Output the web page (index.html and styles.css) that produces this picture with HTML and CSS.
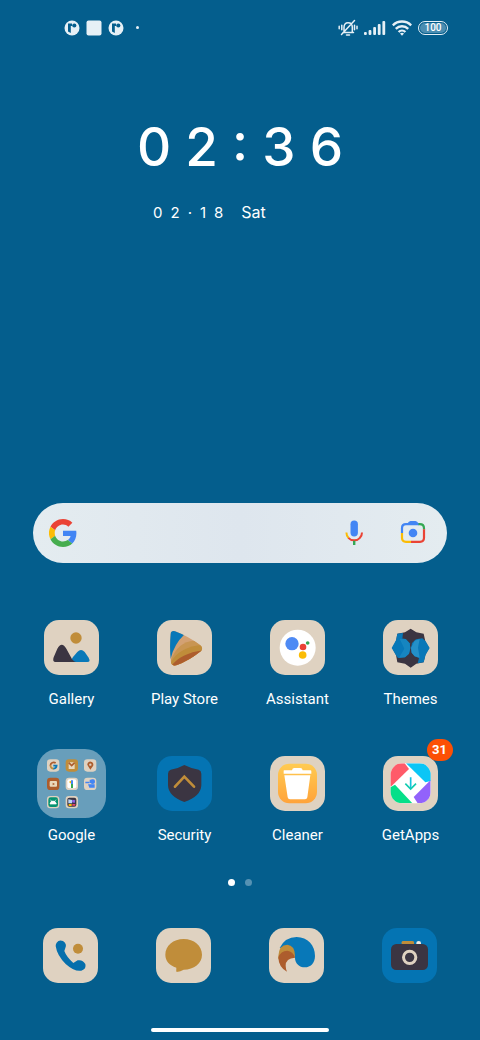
FILE: index.html
```html
<!DOCTYPE html>
<html lang="en">
<head>
<meta charset="utf-8">
<meta name="viewport" content="width=device-width, initial-scale=1">
<title>Home screen</title>
<link rel="stylesheet" href="styles.css">
</head>
<body>
<div class="screen">
  <header class="status">
    <div class="status-left">
      <svg width="16" height="16" viewBox="0 0 16 16"><circle cx="8" cy="8" r="7.500" fill="#e6f0f6"/><path d="M4 3.500h4v2.500H6.800V13L4 11.500z" fill="#045e8d"/><circle cx="10.300" cy="5.500" r="2.100" fill="#045e8d"/></svg>
      <svg width="16" height="16" viewBox="0 0 16 16"><rect x=".5" y=".5" width="15" height="15" rx="2" fill="#e6f0f6"/></svg>
      <svg width="16" height="16" viewBox="0 0 16 16"><circle cx="8" cy="8" r="7.500" fill="#e6f0f6"/><path d="M4 3.500h4v2.500H6.800V13L4 11.500z" fill="#045e8d"/><circle cx="10.300" cy="5.500" r="2.100" fill="#045e8d"/></svg>
      <span class="more-dot"></span>
    </div>
    <div class="status-right">
      <svg width="20" height="18" viewBox="0 0 20 18" fill="none" stroke="#e6f0f6" stroke-width="1.500" stroke-linecap="round"><path d="M5 13.500h10.500M6 13V8.200C6 5.300 7.500 3.800 10 3.800S14.300 5.300 14.300 8.200V13M16.500 1.500 3.500 15.500M8.500 16h3M3.800 6.300v4.500M1.200 7.300v2.500M16.500 6.300v4.500M19 7.300v2.500"/></svg>
      <svg width="22" height="16" viewBox="0 0 22 16" fill="#e6f0f6"><rect x="0" y="12" width="2.800" height="3" rx="1"/><rect x="4.600" y="10" width="2.800" height="5" rx="1"/><rect x="9.200" y="7" width="2.800" height="8" rx="1"/><rect x="13.800" y="4" width="2.800" height="11" rx="1"/><rect x="18.400" y="1" width="2.800" height="14" rx="1"/></svg>
      <svg width="20" height="16" viewBox="0 0 20 16" fill="none" stroke="#e6f0f6" stroke-width="2.400"><path d="M.8 5.300c5-5 13.400-5 18.400 0M3.800 8.800c3.400-3.400 9-3.400 12.400 0M6.600 12c1.900-1.900 4.900-1.900 6.800 0"/><path d="M8 13.400q2-1.400 4 0l-2 2.400z" fill="#e6f0f6" stroke="none"/></svg>
      <span class="battery"><span class="battery-level">100</span></span>
    </div>
  </header>

  <main class="home">
    <section class="clock">
      <time class="time">0 2 : 3 6</time>
      <div class="date"><span>0</span><span>2</span><span>·</span><span>1</span><span>8</span><span class="weekday">Sat</span></div>
    </section>

    <form class="search">
      <svg width="28" height="28" viewBox="0 0 48 48" aria-hidden="true"><path fill="#ea4335" d="M24 9.500c3.540 0 6.710 1.220 9.210 3.600l6.850-6.850C35.900 2.380 30.470 0 24 0 14.620 0 6.510 5.380 2.560 13.220l7.980 6.190C12.430 13.720 17.740 9.500 24 9.500z"/><path fill="#4285f4" d="M46.980 24.550c0-1.570-.15-3.090-.38-4.550H24v9.020h12.940c-.58 2.960-2.260 5.480-4.780 7.180l7.730 6c4.510-4.180 7.090-10.360 7.090-17.650z"/><path fill="#fbbc05" d="M10.530 28.590a14.500 14.500 0 0 1 0-9.180l-7.980-6.190a24 24 0 0 0 0 21.560z"/><path fill="#46ad4f" d="M24 48c6.480 0 11.930-2.130 15.890-5.810l-7.730-6c-2.150 1.450-4.920 2.300-8.160 2.300-6.260 0-11.570-4.220-13.470-9.910l-7.980 6.190C6.510 42.620 14.620 48 24 48z"/></svg>
      <input class="search-input" type="text" aria-label="Search">
      <button class="search-button" type="button" aria-label="Voice search"><svg width="26" height="26" viewBox="0 0 26 26" fill="none"><rect x="9.500" y=".5" width="7.400" height="16" rx="3.700" fill="#4285f4"/><path d="M5.400 12.500c0 2.300.8 4.100 2.200 5.500" stroke="#fbbc05" stroke-width="2"/><path d="M7.400 17.800c3 3.400 8.600 3.400 11.500 0 1.300-1.400 2.100-3.200 2.100-5.300" stroke="#ea4335" stroke-width="2"/><path d="M13.200 20.800v4.200" stroke="#34a853" stroke-width="2.400"/></svg></button>
      <button class="search-button" type="button" aria-label="Search by image"><svg width="26" height="26" viewBox="0 0 26 26" fill="none" stroke-width="2.200"><path d="M7 4Q9 1 10.500 1h5Q17 1 19 4z" fill="#4285f4"/><path d="M2 13V8.200Q2 4.200 6 4.200h13" stroke="#4285f4"/><path d="M18.500 4.200h1.300q4.200 0 4.200 4.200v1" stroke="#34a853"/><path d="M24 9.300v8.500q0 4-4 4h-9" stroke="#ea4335"/><path d="M11 21.800H6q-4 0-4-4V13" stroke="#fbbc05"/><circle cx="13" cy="13" r="4.300" fill="#4285f4"/></svg></button>
    </form>

    <nav class="apps" aria-label="Apps">
      <a class="app" href="#gallery">
        <svg class="icon sand" viewBox="0 0 165 165"><circle cx="96" cy="54" r="17" fill="#c08d3a"/><path d="M86 126Q80 120 87 111L100 96Q111 84 122 96L134 113Q141 126 130 126z" fill="#0878b8"/><path d="M35 126Q24 126 29 112L40 86Q53 63 67 86L81 112Q87 125 96 126z" fill="#3b3542"/></svg>
        <span class="label">Gallery</span>
      </a>
      <a class="app" href="#play">
        <svg class="icon sand" viewBox="0 0 165 165"><defs><clipPath id="play"><path d="M41 42Q42 31 54 34Q92 48 129 75Q140 84 132 93Q96 122 58 136Q45 140 42 127Q37 84 41 42z"/></clipPath></defs><g clip-path="url(#play)"><path d="M30 20h120v130H30z" fill="#d3a173"/><path d="M30 20h75L80 46Q52 72 41 116H30z" fill="#0878b8"/><path d="M41 122Q62 64 112 62L145 74V150H41z" fill="#c89552"/><path d="M41 128Q68 78 145 74V150H41z" fill="#c08d3a"/><path d="M43 138Q72 98 145 90V150H43z" fill="#ad5d2d"/></g></svg>
        <span class="label">Play Store</span>
      </a>
      <a class="app" href="#assistant">
        <svg class="icon sand" viewBox="0 0 165 165"><circle cx="83" cy="83" r="54" fill="#fff"/><circle cx="66" cy="71" r="20" fill="#4e8af4"/><circle cx="99" cy="81" r="10" fill="#ea4335"/><circle cx="98" cy="105" r="11.500" fill="#fbbc05"/><circle cx="113" cy="69" r="5.500" fill="#34a853"/></svg>
        <span class="label">Assistant</span>
      </a>
      <a class="app" href="#themes">
        <svg class="icon sand" viewBox="0 0 165 165"><path d="M83 26 100 37 122 41 127 64 138 84 127 105 122 127 100 131 83 143 66 131 43 127 39 105 28 84 39 64 43 41 66 37z" fill="#3b3542"/><path d="M43 41 60 39 58 56 42 66 38 66z" fill="#0878b8"/><path d="M38 62 52 55 68 57 80 70 82 84 78 101 66 112 45 114 38 104 26 84z" fill="#0878b8"/><path d="M84 84 87 69 99 58 118 55 128 64 140 84 128 104 122 127 104 130 108 114 95 109 86 98z" fill="#0878b8"/><path d="M50 56 68 57 80 70 82 84 78 101 66 112 48 113 64 86z" fill="#1685c0"/><path d="M84 84 95 62 110 57 105 83 110 113 95 109 86 98z" fill="#2490c8"/></svg>
        <span class="label">Themes</span>
      </a>

      <a class="app" href="#google">
        <svg class="icon folder" viewBox="0 0 207 207">
          <g fill="#dfd2c1"><rect x="30" y="31" width="37" height="37" rx="10"/><rect x="86" y="31" width="37" height="37" rx="10" fill="#c08d3a"/><rect x="141" y="31" width="37" height="37" rx="10"/><rect x="30" y="86" width="37" height="37" rx="10" fill="#ad5d2d"/><rect x="86" y="86" width="37" height="37" rx="10"/><rect x="141" y="86" width="37" height="37" rx="10"/><rect x="30" y="141" width="37" height="37" rx="10"/><rect x="86" y="141" width="37" height="37" rx="10"/></g>
          <path d="M56 42a10 10 0 0 0-16 8" stroke="#ad5d2d" stroke-width="5" fill="none"/><path d="M40 49q2 11 10 10" stroke="#c08d3a" stroke-width="5" fill="none"/><path d="M49 50h10q-1 9-10 9" stroke="#0878b8" stroke-width="5" fill="none"/>
          <path d="M95 40h18v20H95z" fill="#ead8bd"/><path d="m95 41 9 9 9-9" stroke="#ad5d2d" stroke-width="5" fill="none"/>
          <path d="M151 47a9 9 0 1 1 17 4l-8 11-7-11z" fill="#ad5d2d"/><circle cx="160" cy="47" r="3.500" fill="#dfd2c1"/>
          <rect x="38" y="96" width="22" height="17" rx="3" fill="#ead8bd"/><path d="m47 101 7 4-7 4z" fill="#ad5d2d"/>
          <rect x="91" y="91" width="27" height="27" rx="6" fill="#fff"/><path d="m98 101 8-5" stroke="#fbbc05" stroke-width="6"/><path d="M105 94v12" stroke="#4285f4" stroke-width="6"/><path d="M105 105v12" stroke="#34a853" stroke-width="6"/>
          <path d="M153 106h20v10h-16zM158 92h14v10h-14zM145 98h12v5h-12z" fill="#4285f4"/><circle cx="167" cy="98" r="7" fill="#4285f4"/>
          <rect x="34" y="145" width="29" height="29" rx="7" fill="#079271"/><path d="M39 165q1-9 9-9t10 9zM40 152l6 7M57 152l-6 7" fill="#fff" stroke="#fff" stroke-width="2"/>
          <rect x="91" y="146" width="27" height="27" rx="6" fill="#3b3542"/><path d="m94 151 12 2-1 10H94z" fill="#b9d6f7"/><path d="m106 152 9 2-2 8-8-2z" fill="#8e60e4"/><path d="M95 165h9v6h-9z" fill="#fbbc05"/><path d="M106 165h9v5h-9z" fill="#ea4368"/>
        </svg>
        <span class="label">Google</span>
      </a>
      <a class="app" href="#security">
        <svg class="icon blue" viewBox="0 0 165 165"><path d="M82 27Q101 37 125 41 133 44 133 53V88Q132 121 82 138 34 121 33 88V53Q33 44 41 41 65 37 82 27z" fill="#3b3542"/><path d="m54 92 28-30 29 30" fill="none" stroke="#c08d3a" stroke-width="8" stroke-linecap="round"/></svg>
        <span class="label">Security</span>
      </a>
      <a class="app" href="#cleaner">
        <svg class="icon sand" viewBox="0 0 165 165"><defs><linearGradient id="warm" x1="0" y1="0" x2="0" y2="1"><stop stop-color="#ffcb52"/><stop offset="1" stop-color="#ffa33a"/></linearGradient></defs><rect x="24" y="23" width="117" height="119" rx="34" fill="url(#warm)"/><path d="M42 43h24q1-7 7-7h18q6 0 7 7h23q3 0 3 3v7H41v-7q0-3 1-3zM43 58h78l-9 66q-1 6-7 6H60q-6 0-7-6z" fill="#fff"/></svg>
        <span class="label">Cleaner</span>
      </a>
      <a class="app" href="#getapps">
        <svg class="icon sand" viewBox="0 0 165 165"><defs><clipPath id="tile"><rect x="23" y="22" width="120" height="120" rx="34"/></clipPath></defs><g clip-path="url(#tile)"><path d="M20 20h130v130H20z" fill="#fff"/><path d="M23 22h42l13 17-53 52h-8z" fill="#ff5b69"/><path d="M69 22h78v52l-20 5z" fill="#0bc6f6"/><path d="M143 72v70h-39l-12-19z" fill="#9262fb"/><path d="M17 97 36 86 88 142H17z" fill="#07df89"/></g><path d="M83 64v35" stroke="#14c3df" stroke-width="5"/><path d="m67 83 16 16 16-16" fill="none" stroke="#12ccb1" stroke-width="5"/></svg>
        <span class="badge">31</span>
        <span class="label">GetApps</span>
      </a>
    </nav>

    <div class="pages"><span class="page current"></span><span class="page"></span></div>
  </main>

  <nav class="dock" aria-label="Dock">
    <a class="app" href="#phone" aria-label="Phone"><svg class="icon sand" viewBox="0 0 165 165"><path d="M41 44Q48 34 60 39 73 48 67 60L64 69Q70 86 91 105L104 97Q119 94 127 108 131 123 115 128 95 132 68 108 42 82 38 54 38 48 41 44z" fill="#056fac"/><circle cx="105" cy="62" r="15" fill="#c08d3a"/></svg></a>
    <a class="app" href="#messages" aria-label="Messages"><svg class="icon sand" viewBox="0 0 165 165"><path d="M83 33C114 33 138 53 138 80S114 124 83 125Q74 130 62 132 60 130 61 119C40 112 28 98 28 80 28 53 52 33 83 33z" fill="#c08d3a"/></svg></a>
    <a class="app" href="#browser" aria-label="Browser"><svg class="icon sand" viewBox="0 0 165 165"><path d="M32 60Q48 27 83 27C116 27 138 52 138 84 138 106 124 118 108 118 90 118 78 105 78 89L60 56z" fill="#0878b8"/><path d="M28 84Q30 50 55 50 77 52 78 82L76 90Q48 65 28 95z" fill="#c08d3a"/><path d="M28 88Q35 69 55 68 72 70 78 89 50 91 50 113 50 122 54 131 29 119 28 88z" fill="#ad5d2d"/></svg></a>
    <a class="app" href="#camera" aria-label="Camera"><svg class="icon blue" viewBox="0 0 165 165"><path d="M59 49v-6q0-4 5-4h27q5 0 5 4v6z" fill="#c08d3a"/><path d="M103 48v-3q0-6 7-6t7 6v3z" fill="#eee9e2"/><rect x="27" y="48" width="111" height="78" rx="16" fill="#3b3542"/><circle cx="83" cy="88" r="18.500" fill="none" stroke="#dfd2c1" stroke-width="9"/></svg></a>
  </nav>
  <div class="home-bar"></div>
</div>
</body>
</html>
```
FILE: styles.css
```css
* {
  box-sizing: border-box;
}

body {
  margin: 0;
  background: #045e8d;
  color: #fff;
  font-family: Roboto, "Liberation Sans", sans-serif;
}

svg {
  display: block;
}

.screen {
  display: flex;
  flex-direction: column;
  min-height: 100vh;
  padding-bottom: 8px;
}

.status {
  display: flex;
  justify-content: space-between;
  align-items: center;
  height: 55px;
  padding: 0 32px 0 64px;
}

.status-left,
.status-right {
  display: flex;
  align-items: center;
  gap: 6px;
}

.more-dot {
  width: 3px;
  height: 3px;
  margin-left: 6px;
  border-radius: 50%;
  background: #e6f0f6;
}

.battery {
  width: 30px;
  height: 14px;
  padding: 1px;
  border: 1px solid #e6f0f6;
  border-radius: 7px;
}

.battery-level {
  display: block;
  border-radius: 5px;
  background: #4a8db1;
  font-size: 10px;
  font-weight: 500;
  line-height: 10px;
  text-align: center;
}

.clock {
  padding-top: 60px;
  font-family: Inter, "Liberation Sans", sans-serif;
}

.time {
  display: block;
  font-size: 53px;
  font-weight: 500;
  line-height: 64px;
  text-align: center;
  font-feature-settings: "case";
}

.date {
  display: flex;
  align-items: baseline;
  gap: 8px;
  margin-top: 21px;
  padding-left: 153px;
  font-size: 15px;
  line-height: 24px;
}

.weekday {
  margin-left: 10px;
  font-size: 16px;
}

.search {
  display: flex;
  align-items: center;
  height: 60px;
  margin: 278px 33px 0;
  padding: 0 21px 0 16px;
  border-radius: 30px;
  background: linear-gradient(90deg, #e4ecf0, #dee6ee 50%, #e4ecf0);
}

.search-input {
  flex: 1;
  min-width: 0;
  height: 40px;
  border: 0;
  outline: 0;
  background: transparent;
  font: inherit;
}

.search-button {
  padding: 0;
  border: 0;
  background: transparent;
}

.search-button + .search-button {
  margin-left: 33px;
}

.apps,
.dock {
  display: grid;
  grid-template-columns: repeat(4, 1fr);
  padding: 0 14px;
}

.apps {
  row-gap: 47px;
  margin-top: 57px;
  padding: 0 13px 0 15px;
}

.app {
  position: relative;
  display: flex;
  flex-direction: column;
  align-items: center;
  color: #fff;
  text-decoration: none;
}

.icon {
  width: 55px;
  height: 55px;
  border-radius: 15px;
}

.sand {
  background: #dfd2c1;
}

.blue {
  background: #0474b3;
}

.folder {
  width: 69px;
  height: 69px;
  margin: -7px 0;
  border-radius: 21px;
  background: #689ebb;
}

.label {
  margin-top: 14px;
  font-size: 15px;
  line-height: 20px;
}

.badge {
  position: absolute;
  top: -17px;
  left: 50%;
  width: 26px;
  margin-left: 16px;
  border-radius: 11px;
  background: #fc5005;
  font-size: 13px;
  font-weight: 700;
  line-height: 22px;
  text-align: center;
}

.pages {
  display: flex;
  justify-content: center;
  gap: 10px;
  margin-top: 34px;
}

.page {
  width: 7px;
  height: 7px;
  border-radius: 50%;
  background: #5692b3;
}

.current {
  background: #fff;
}

.dock {
  margin-top: 42px;
}

.home-bar {
  width: 37%;
  height: 4px;
  margin: auto auto 0;
  border-radius: 2px;
  background: #fff;
}
```
